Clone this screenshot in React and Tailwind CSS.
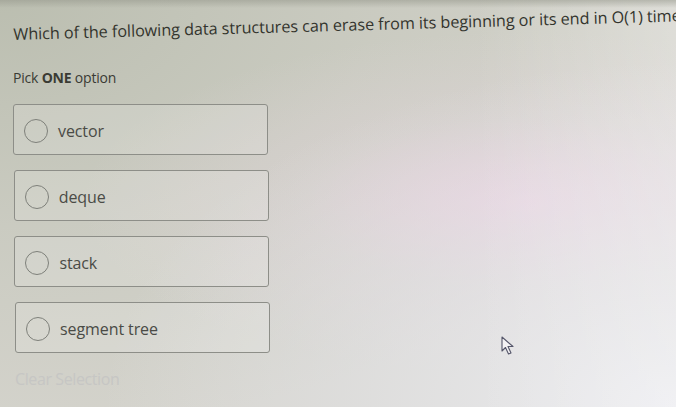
import React from "react";

const options = ["vector", "deque", "stack", "segment tree"];

export default function App() {
  return (
    <div className="relative w-[676px] h-[407px] overflow-hidden bg-[#d4d3cc] font-['Open_Sans',sans-serif]">
      <div className="absolute inset-0 bg-[radial-gradient(ellipse_at_0%_0%,#bbbeb0_0%,rgba(196,198,186,0.6)_40%,rgba(210,210,205,0)_75%)]" />
      <div className="absolute inset-0 bg-[radial-gradient(ellipse_at_78%_50%,rgba(234,208,224,0.9)_0%,rgba(226,214,220,0.4)_30%,rgba(220,218,215,0)_60%)]" />
      <div className="absolute inset-0 bg-[radial-gradient(ellipse_at_100%_100%,rgba(236,236,240,1)_0%,rgba(230,230,234,0.5)_35%,rgba(230,230,234,0)_60%)]" />
      <div className="absolute inset-0 bg-[linear-gradient(90deg,rgba(0,0,0,0)_70%,rgba(255,255,255,0.25)_100%)]" />
      <div className="absolute inset-x-0 top-0 h-[8px] bg-[linear-gradient(180deg,rgba(150,152,140,0.55)_0%,rgba(150,152,140,0)_100%)]" />
      <div className="relative flex flex-col pl-[13px]">
        <div className="pt-[23px] text-[16.2px] leading-[22px] text-[#33342d] whitespace-nowrap tracking-[-0.05px] origin-left -rotate-[1.6deg]">
          Which of the following data structures can erase from its beginning or its end in O(1) time
        </div>
        <div className="pt-[23px] text-[14px] leading-[20px] text-[#3a3b34] tracking-[-0.2px]">
          Pick <span className="font-bold">ONE</span> option
        </div>
        <div className="pt-[16px] flex flex-col gap-[15px]">
          {options.map((o, i) => (
            <div
              key={o}
              style={{ marginLeft: i * 0.7 }}
              className="w-[255px] h-[51px] flex items-center rounded-[3px] border border-[#8d8e88] bg-white/15"
            >
              <div className="ml-[10px] mt-[3px] w-[24px] h-[24px] rounded-full border-[1.5px] border-[#7e807a]" />
              <span className="ml-[10px] mt-[3px] text-[16px] text-[#4a4b46] tracking-[-0.1px]">{o}</span>
            </div>
          ))}
        </div>
        <div className="pt-[14px] pl-[2px] text-[16px] text-[#c6c6c4] tracking-[-0.4px]">Clear Selection</div>
      </div>
      <svg className="absolute left-[501px] top-[336px]" width="18" height="22" viewBox="0 0 18 22">
        <path d="M1 1 L1 15 L4.5 11.5 L7.5 18 L10 17 L7 10.5 L12 10.5 Z" fill="#f4f2f4" stroke="#55566a" strokeWidth="1.1" strokeLinejoin="round" />
      </svg>
    </div>
  );
}
